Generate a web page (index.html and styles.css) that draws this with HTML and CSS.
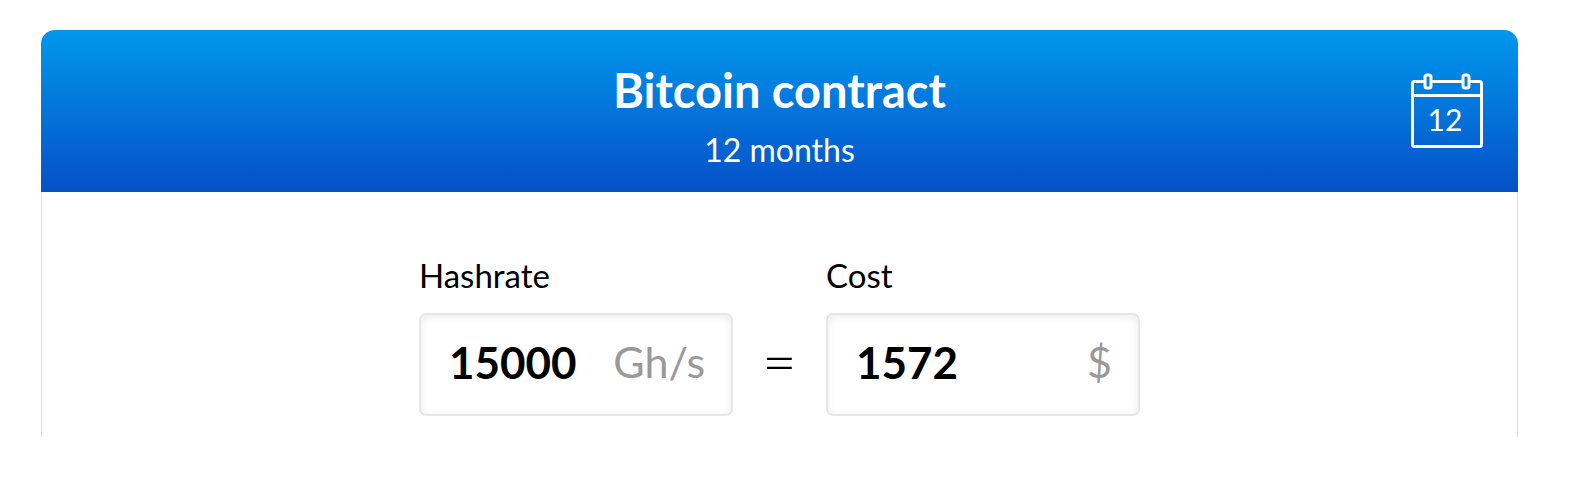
FILE: index.html
```html
<!DOCTYPE html>
<html lang="en">
<head>
    <meta charset="UTF-8">
    <meta name="viewport" content="width=device-width, initial-scale=1.0">
    <title>Bitcoin contract</title>
    <link rel="stylesheet" href="styles.css">
</head>
<body>
    <div class="card">
        <div class="card-header">
            <div class="card-title">
                <h2>Bitcoin contract</h2>
                <p>12 months</p>
            </div>
            <svg class="calendar" width="72" height="76" viewBox="0 0 72 76" fill="none" stroke="#fff" stroke-width="3">
                <path d="M13 8.500H3.500Q1.500 8.500 1.500 10.500V71.500Q1.500 73.500 3.500 73.500H68.500Q70.500 73.500 70.500 71.500V10.500Q70.500 8.500 68.500 8.500H59M21 8.500H51M1.500 22.500H70.500"/>
                <rect x="14" y="2" width="6" height="13" rx="2"/>
                <rect x="52" y="2" width="6" height="13" rx="2"/>
                <text class="calendar-number" x="34" y="58" text-anchor="middle">12</text>
            </svg>
        </div>
        <form class="card-body">
            <div class="form-group">
                <label for="hashrate">Hashrate</label>
                <div class="field">
                    <input type="text" id="hashrate" name="hashrate" value="15000">
                    <span class="unit">Gh/s</span>
                </div>
            </div>
            <span class="equals">=</span>
            <div class="form-group">
                <label for="cost">Cost</label>
                <div class="field">
                    <input type="text" id="cost" name="cost" value="1572">
                    <span class="unit">$</span>
                </div>
            </div>
        </form>
    </div>
</body>
</html>
```

FILE: styles.css
```css
* {
    box-sizing: border-box;
}
body {
    font-family: Lato, sans-serif;
    background: #fff;
    color: #000;
    margin: 0;
    padding: 30px 53px 30px 41px;
}
.card {
    border-radius: 14px 14px 0 0;
    overflow: hidden;
}
.card-header {
    position: relative;
    padding: 30px 120px 20px;
    background: linear-gradient(#0098ed, #0650c7);
    color: #fff;
    text-align: center;
}
h2 {
    margin: 0;
    font-size: 47px;
    line-height: 60px;
    font-weight: bold;
}
.card-title p {
    margin: 0;
    padding-top: 8px;
    font-size: 32px;
    line-height: 44px;
}
.calendar {
    position: absolute;
    top: 43px;
    right: 35px;
}
.calendar-number {
    fill: #fff;
    stroke: none;
    font-size: 30px;
}
.card-body {
    display: flex;
    justify-content: center;
    align-items: flex-end;
    padding: 61px 0 21px;
    border: solid #dfdfdf;
    border-width: 0 1px;
}
.form-group {
    width: 314px;
}
label {
    display: block;
    margin-bottom: 16px;
    font-size: 33px;
    line-height: 44px;
}
.field {
    display: flex;
    align-items: center;
    height: 103px;
    padding: 0 26px 6px 28px;
    border: 2px solid #e6e6e6;
    border-radius: 7px;
    box-shadow: inset 0 2px 10px rgba(0, 0, 0, 0.08);
}
input {
    flex: 1;
    min-width: 0;
    padding: 0;
    border: none;
    outline: none;
    background: transparent;
    font-family: inherit;
    font-size: 44px;
    font-weight: bold;
    color: #000;
}
.unit {
    font-size: 43px;
    color: #999;
}
.equals {
    width: 93px;
    padding-bottom: 8px;
    font-size: 60px;
    font-weight: 300;
    line-height: 95px;
    text-align: center;
}
```
